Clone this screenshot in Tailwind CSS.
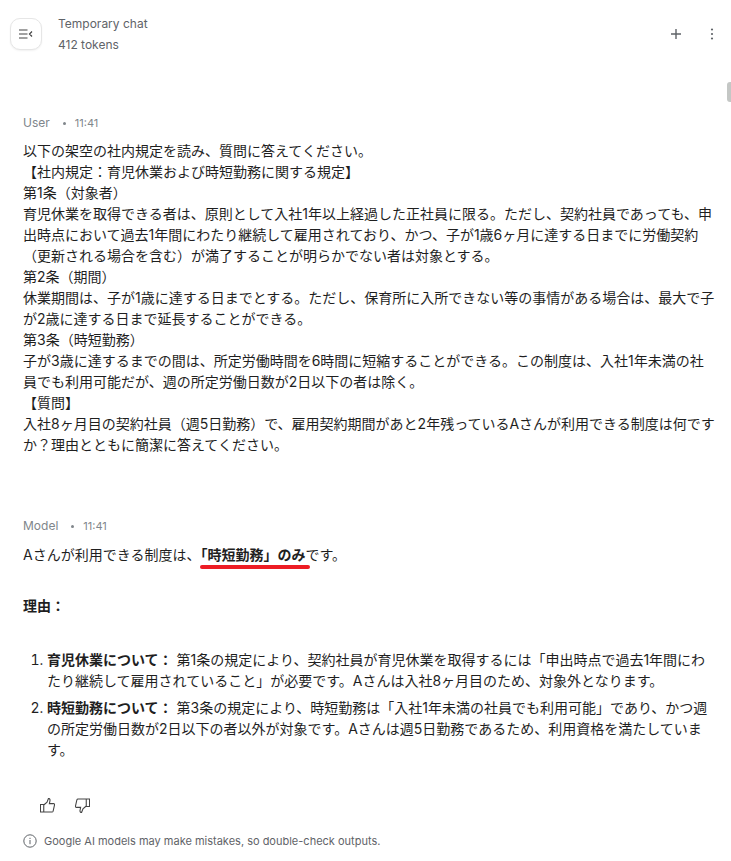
<!DOCTYPE html>
<html lang="ja">
<head>
<meta charset="utf-8">
<script src="https://cdn.jsdelivr.net/npm/@tailwindcss/browser@4"></script>
</head>
<body class="bg-white">
<div class="relative w-[731px] h-[861px] overflow-hidden font-['Inter','Noto_Sans_CJK_JP',sans-serif] text-[#1f1f1f]">
  <header class="flex items-center h-[68px] pl-[10px] pr-[17px]">
    <button class="flex items-center justify-center w-[32px] h-[32px] rounded-[10px] border border-[#e6e6e6] shadow-[0_1px_2px_rgba(0,0,0,0.06)] bg-white">
      <svg width="14" height="10" viewBox="0 0 14 10" fill="none" stroke="#444" stroke-width="1.2"><path d="M0 1h8.500M0 5h8.500M0 9h8.500M13 2.500 10.500 5 13 7.500"/></svg>
    </button>
    <div class="ml-[16px] flex flex-col gap-[3px] text-[12px] leading-[18px] text-[#5f6368]">
      <span>Temporary chat</span>
      <span>412 tokens</span>
    </div>
    <div class="ml-auto flex items-center gap-[28px]">
      <svg width="12" height="12" viewBox="0 0 12 12" stroke="#5f6368" stroke-width="1.400"><path d="M6 1v10M1 6h10"/></svg>
      <svg width="4" height="12" viewBox="0 0 4 12" fill="#5f6368"><circle cx="2" cy="1.500" r="1.100"/><circle cx="2" cy="6" r="1.100"/><circle cx="2" cy="10.500" r="1.100"/></svg>
    </div>
  </header>
  <main class="pl-[23px] pr-[14px] text-[14px] leading-[21px]">
    <div class="pt-[46px] flex items-center text-[12px] leading-[18px] text-[#80868b]">
      <span>User</span><span class="ml-[13px] mr-[9px] w-[3px] h-[3px] rounded-full bg-[#80868b]"></span><span class="text-[11px]">11:41</span>
    </div>
    <div class="mt-[8px] leading-[21px]">
      <p>以下の架空の社内規定を読み、質問に答えてください。</p>
      <p>【社内規定：育児休業および時短勤務に関する規定】</p>
      <p>第1条（対象者）</p>
      <p>育児休業を取得できる者は、原則として入社1年以上経過した正社員に限る。ただし、契約社員であっても、申出時点において過去1年間にわたり継続して雇用されており、かつ、子が1歳6ヶ月に達する日までに労働契約（更新される場合を含む）が満了することが明らかでない者は対象とする。</p>
      <p>第2条（期間）</p>
      <p>休業期間は、子が1歳に達する日までとする。ただし、保育所に入所できない等の事情がある場合は、最大で子が2歳に達する日まで延長することができる。</p>
      <p>第3条（時短勤務）</p>
      <p>子が3歳に達するまでの間は、所定労働時間を6時間に短縮することができる。この制度は、入社1年未満の社員でも利用可能だが、週の所定労働日数が2日以下の者は除く。</p>
      <p>【質問】</p>
      <p>入社8ヶ月目の契約社員（週5日勤務）で、雇用契約期間があと2年残っているAさんが利用できる制度は何ですか？理由とともに簡潔に答えてください。</p>
    </div>
    <div class="mt-[62px] flex items-center text-[12px] leading-[18px] text-[#80868b]">
      <span>Model</span><span class="ml-[13px] mr-[9px] w-[3px] h-[3px] rounded-full bg-[#80868b]"></span><span class="text-[11px]">11:41</span>
    </div>
    <p class="mt-[9px]">Aさんが利用できる制度は、<strong class="relative font-bold">「時短勤務」のみ<span class="absolute left-0 right-[-5px] bottom-[-6px] h-[4px] rounded-full bg-[#ed1c24]"></span></strong>です。</p>
    <p class="mt-[30px] font-bold">理由：</p>
    <ol class="mt-[33px] list-decimal pl-[24px]">
      <li class="mb-[6px]"><strong class="font-bold">育児休業について：</strong> 第1条の規定により、契約社員が育児休業を取得するには「申出時点で過去1年間にわたり継続して雇用されていること」が必要です。Aさんは入社8ヶ月目のため、対象外となります。</li>
      <li><strong class="font-bold">時短勤務について：</strong> 第3条の規定により、時短勤務は「入社1年未満の社員でも利用可能」であり、かつ週の所定労働日数が2日以下の者以外が対象です。Aさんは週5日勤務であるため、利用資格を満たしています。</li>
    </ol>
    <div class="mt-[38px] flex items-center gap-[20px] pl-[17px]">
      <svg width="15" height="15" viewBox="0 0 16 16" fill="none" stroke="#444" stroke-width="1.150"><path d="M.5 7h3.500v8H.5zM4 7.500 7.500 4.500 9 .5c1.500 0 2 1.200 1.500 3L10 6h4.500c.8 0 1.200.7 1 1.300L14 14c-.2.6-.6 1-1.200 1H4"/></svg>
      <svg width="15" height="15" viewBox="0 0 16 16" fill="none" stroke="#444" stroke-width="1.150"><path d="M15.500 9H12V1h3.500zM12 8.500 8.500 11.500 7 15.500c-1.500 0-2-1.200-1.500-3L6 10H1.500c-.8 0-1.200-.7-1-1.300L2 2c.2-.6.600-1 1.200-1H12"/></svg>
    </div>
    <div class="mt-[20px] flex items-center gap-[7px] text-[11px] leading-[16px] text-[#5f6368]">
      <svg width="14" height="14" viewBox="0 0 14 14" fill="none" stroke="#5f6368" stroke-width="1"><circle cx="7" cy="7" r="6.200"/><path d="M7 6v4.200M7 3.800v1.200"/></svg>
      <span>Google AI models may make mistakes, so double-check outputs.</span>
    </div>
  </main>
  <div class="absolute right-0 top-[82px] w-[4px] h-[20px] rounded-l-[3px] bg-[#c4c7c5]"></div>
</div>
</body>
</html>
